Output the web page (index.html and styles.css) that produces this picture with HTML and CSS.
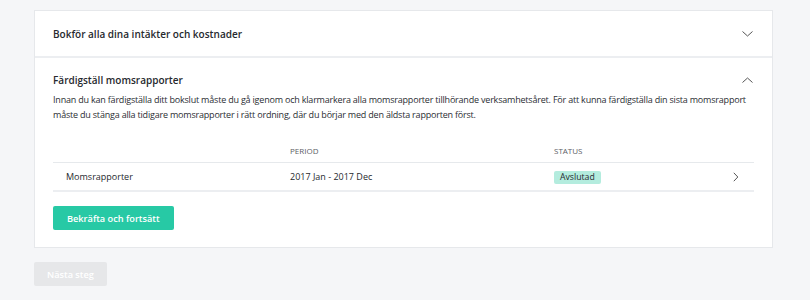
FILE: index.html
```html
<!DOCTYPE html>
<html lang="sv">
<head>
  <meta charset="UTF-8" />
  <title>Bokslut</title>
  <link rel="stylesheet" href="styles.css">
</head>
<body>
  <div class="page">
    <div class="card">
      <div class="section">
        <div class="section-head">
          <h2>Bokför alla dina intäkter och kostnader</h2>
          <svg class="chev" width="11" height="6" viewBox="0 0 11 6"><path d="M0.5 0.5l5 4.5 5-4.5" fill="none" stroke="#555" stroke-width="1"/></svg>
        </div>
      </div>
      <div class="section open">
        <div class="section-head">
          <h2>Färdigställ momsrapporter</h2>
          <svg class="chev" width="11" height="6" viewBox="0 0 11 6"><path d="M0.5 5.5l5-4.5 5 4.5" fill="none" stroke="#555" stroke-width="1"/></svg>
        </div>
        <p class="desc">Innan du kan färdigställa ditt bokslut måste du gå igenom och klarmarkera alla momsrapporter tillhörande verksamhetsåret. För att kunna färdigställa din sista momsrapport måste du stänga alla tidigare momsrapporter i rätt ordning, där du börjar med den äldsta rapporten först.</p>

        <div class="table">
          <div class="row head">
            <span class="c-name"></span>
            <span class="c-period">Period</span>
            <span class="c-status">Status</span>
            <span class="c-arrow"></span>
          </div>
          <div class="row">
            <span class="c-name">Momsrapporter</span>
            <span class="c-period">2017 Jan - 2017 Dec</span>
            <span class="c-status"><span class="badge">Avslutad</span></span>
            <span class="c-arrow"><svg width="6" height="10" viewBox="0 0 6 10"><path d="M0.8 0.8l4 4.2-4 4.2" fill="none" stroke="#555" stroke-width="1"/></svg></span>
          </div>
        </div>

        <button class="btn primary">Bekräfta och fortsätt</button>
      </div>
    </div>
    <button class="btn disabled">Nästa steg</button>
  </div>
</body>
</html>
```

FILE: styles.css
```css
body { margin: 0; background: #f5f6f8; font-family: "Open Sans", sans-serif; color: #2b2e33 }
.page { padding: 10px 37px 0 34px }
.card { background: #fff; border: 1px solid #e6e8eb }
.section { padding: 0 18px }
.section + .section { border-top: 2px solid #eceef1 }
.section-head { display: flex; align-items: center; justify-content: space-between; height: 45px }
.section-head h2 { margin: 0; font-size: 10px; font-weight: 600; color: #26292e }
.section-head .chev { margin-right: 1px }
.open .section-head { height: 44px }
.open { padding-bottom: 17px }
.desc { margin: -10px 0 0; font-size: 9px; letter-spacing: -0.2px; line-height: 15px; color: #2b2e33 }

.table { margin-top: 18px }
.row { display: flex; align-items: center; height: 27px; border-bottom: 2px solid #eceef1; font-size: 9px; color: #26292e }
.row.head { height: 20px; padding-bottom: 2px; border-bottom: 1px solid #e6e9ec; font-size: 8px; text-transform: uppercase; color: #5c6066 }
.c-name { width: 237px; padding-left: 13px; box-sizing: border-box }
.c-period { width: 264px }
.c-status { flex: 1 }
.c-arrow { width: 21px; display: flex; align-items: center }
.badge { display: inline-block; background: #b4ecde; color: #26292e; padding: 0 6px; line-height: 13px; border-radius: 2px; font-size: 8.7px }

.btn { display: block; font-family: "Open Sans", sans-serif; font-size: 9.2px; font-weight: 600; border: 0; border-radius: 2px; height: 24px; cursor: pointer }
.btn.primary { margin-top: 14px; background: #27c9a5; color: #fff; padding: 0 14px }
.btn.disabled { margin-top: 14px; background: #e6e7e9; color: #fff; padding: 0 13px; cursor: default }
```
